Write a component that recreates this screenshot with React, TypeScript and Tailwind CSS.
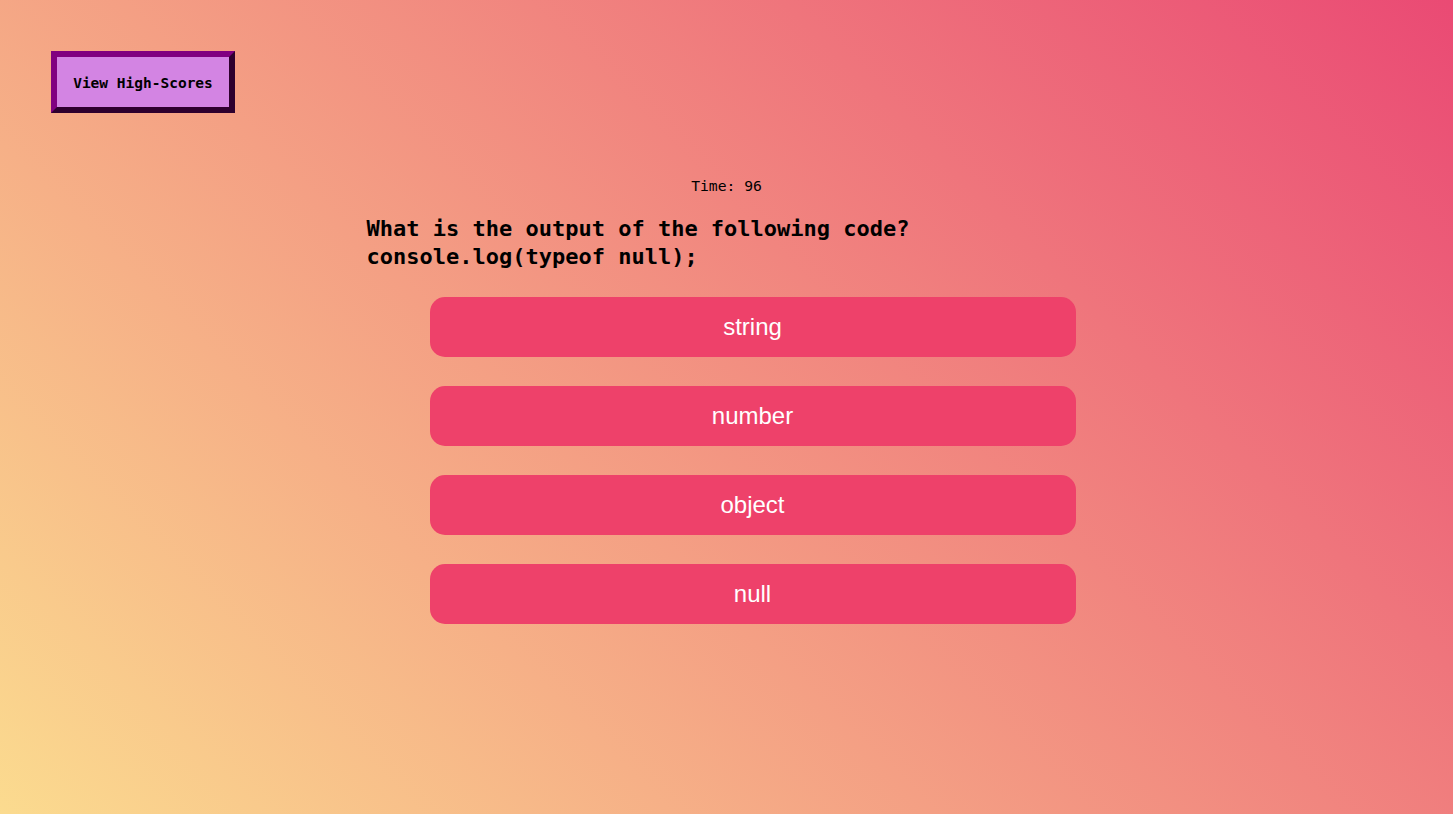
export default function App() {
  const answers = ["string", "number", "object", "null"];

  return (
    <div className="min-h-screen w-full bg-[linear-gradient(45deg,#fbdb8f,#ea4a74)] font-['DejaVu_Sans_Mono',monospace] text-black">
      {/* Header */}
      <header className="pt-[51px] pl-[51px]">
        <button className="flex h-[62px] w-[184px] items-center justify-center border-[6px] border-solid border-t-[#800080] border-l-[#800080] border-b-[#2e002e] border-r-[#2e002e] bg-[#d384e3] pt-[4px] text-[14.5px] font-bold">
          View High-Scores
        </button>
      </header>

      {/* Quiz */}
      <main className="mx-auto mt-[63px] w-[720px]">
        <p className="text-center text-[14.7px] leading-[20px]">Time: 96</p>

        <h2 className="mt-[19px] text-[22px] font-bold leading-[28px]">
          <span className="block">What is the output of the following code?</span>
          <span className="block">console.log(typeof null);</span>
        </h2>

        <div className="mt-[26px] ml-[63px] flex w-[646px] flex-col gap-[29px]">
          {answers.map((a) => (
            <button
              key={a}
              className="h-[60px] w-full rounded-[15px] bg-[#ee416a] font-['Liberation_Sans',Arial,sans-serif] text-[24px] text-white"
            >
              {a}
            </button>
          ))}
        </div>
      </main>
    </div>
  );
}
